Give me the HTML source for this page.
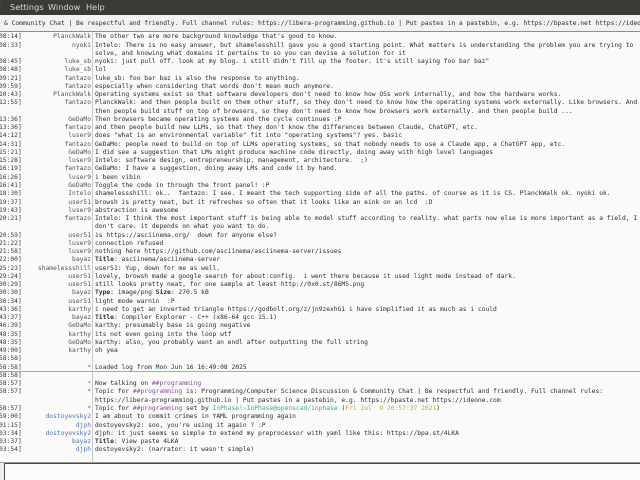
<!DOCTYPE html>
<html><head><meta charset="utf-8">
<style>
*{margin:0;padding:0;box-sizing:border-box}
html,body{width:640px;height:480px;overflow:hidden;background:#fafaf9}
body{position:relative;font-family:"DejaVu Sans Mono","Liberation Mono",monospace;font-size:6.3px;color:#2e2e2e}
#menu{position:absolute;left:0;top:0;width:640px;height:15px;background:#3b3a36;color:#dcd8cf;font-family:"DejaVu Sans","Liberation Sans",sans-serif;font-size:8.2px;line-height:15px;white-space:pre}
#menu span{position:absolute;top:0}
#topic{position:absolute;left:0;top:15px;width:640px;height:17px;background:#f3f2f0;border-bottom:1px solid #8d8d8a;white-space:pre;line-height:17px;padding-left:4px;overflow:hidden}
#log{position:absolute;left:0;top:32px;width:640px;height:430px;overflow:hidden}
#sep{position:absolute;left:92px;top:0;width:1px;height:430px;background:#c9c9c9}
.r{position:absolute;left:0;height:8.26px;line-height:8.26px;white-space:pre;width:640px}
.t{position:absolute;left:-1px;color:#3a3a3a}
.n{position:absolute;right:549px;color:#555;text-align:right}
.m{position:absolute;left:95px}
.b .n{color:#4d74b8}
b{font-weight:bold}
.div{position:absolute;left:0;width:640px;height:1px;background:#c8a085}
.pu{color:#8b4c9e}.gr{color:#3cae8c}.ye{color:#c9a52a}
#bottom{position:absolute;left:0;top:462px;width:640px;height:18px;background:#f0efed;border-top:1px solid #9a9a98}
#input{position:absolute;left:4px;top:463px;width:640px;height:17px;background:#fbfbfa;border-top:1px solid #4a4a48;border-left:1px solid #4a4a48}
</style></head><body>
<div id="menu"><span style="left:-3px">r</span><span style="left:10px">Settings</span><span style="left:48px">Window</span><span style="left:86px">Help</span></div>
<div id="topic">&amp; Community Chat | Be respectful and friendly. Full channel rules: https://libera-programming.github.io | Put pastes in a pastebin, e.g. https://bpaste.net https://ideone.com</div>
<div id="log">
<div id="sep"></div>
<div class="r" style="top:1.3px"><span class="t">08:14]</span><span class="n">PlanckWalk</span><span class="m">The other two are more background knowledge that's good to know.</span></div>
<div class="r" style="top:9.56px"><span class="t">08:33]</span><span class="n">nyoki</span><span class="m">Intelo: There is no easy answer, but shamelesshill gave you a good starting point. What matters is understanding the problem you are trying to</span></div>
<div class="r" style="top:17.82px"><span class="m">solve, and knowing what domains it pertains to so you can devise a solution for it</span></div>
<div class="r" style="top:26.08px"><span class="t">08:45]</span><span class="n">luke_sb</span><span class="m">nyoki: just pull off. look at my blog. i still didn't fill up the footer. it's still saying foo bar baz"</span></div>
<div class="r" style="top:34.34px"><span class="t">08:48]</span><span class="n">luke_sb</span><span class="m">lol</span></div>
<div class="r" style="top:42.6px"><span class="t">09:21]</span><span class="n">fantazo</span><span class="m">luke_sb: foo bar baz is also the response to anything.</span></div>
<div class="r" style="top:50.86px"><span class="t">09:59]</span><span class="n">fantazo</span><span class="m">especially when considering that words don't mean much anymore.</span></div>
<div class="r" style="top:59.12px"><span class="t">10:43]</span><span class="n">PlanckWalk</span><span class="m">Operating systems exist so that software developers don't need to know how OSs work internally, and how the hardware works.</span></div>
<div class="r" style="top:67.38px"><span class="t">12:55]</span><span class="n">fantazo</span><span class="m">PlanckWalk: and then people built on them other stuff, so they don't need to know how the operating systems work externally. Like browsers. And</span></div>
<div class="r" style="top:75.64px"><span class="m">then people build stuff on top of browsers, so they don't need to know how browsers work externally. and then people build ...</span></div>
<div class="r" style="top:83.9px"><span class="t">13:36]</span><span class="n">GeDaMo</span><span class="m">Then browsers became operating systems and the cycle continues :P</span></div>
<div class="r" style="top:92.16px"><span class="t">13:36]</span><span class="n">fantazo</span><span class="m">and then people build new LLMs, so that they don't know the differences between Claude, ChatGPT, etc.</span></div>
<div class="r" style="top:100.42px"><span class="t">14:12]</span><span class="n">luser9</span><span class="m">does "what is an environmental variable" fit into "operating systems"? yes. basic</span></div>
<div class="r" style="top:108.68px"><span class="t">14:31]</span><span class="n">fantazo</span><span class="m">GeDaMo: people need to build on top of LLMs operating systems, so that nobody needs to use a Claude app, a ChatGPT app, etc.</span></div>
<div class="r" style="top:116.94px"><span class="t">15:21]</span><span class="n">GeDaMo</span><span class="m">I did see a suggestion that LMs might produce machine code directly, doing away with high level languages</span></div>
<div class="r" style="top:125.2px"><span class="t">15:28]</span><span class="n">luser9</span><span class="m">Intelo: software design, entrepreneurship, management, architecture.  ;)</span></div>
<div class="r" style="top:133.46px"><span class="t">16:19]</span><span class="n">fantazo</span><span class="m">GeDaMo: I have a suggestion, doing away LMs and code it by hand.</span></div>
<div class="r" style="top:141.72px"><span class="t">16:26]</span><span class="n">luser9</span><span class="m">i been vibin</span></div>
<div class="r" style="top:149.98px"><span class="t">16:41]</span><span class="n">GeDaMo</span><span class="m">Toggle the code in through the front panel! :P</span></div>
<div class="r" style="top:158.24px"><span class="t">18:30]</span><span class="n">Intelo</span><span class="m">shamelessshill: ok..  fantazo: I see. I meant the tech supporting side of all the paths. of course as it is CS. PlanckWalk ok. nyoki ok.</span></div>
<div class="r" style="top:166.5px"><span class="t">19:37]</span><span class="n">user51</span><span class="m">browsh is pretty neat, but it refreshes so often that it looks like an eink on an lcd  :D</span></div>
<div class="r" style="top:174.76px"><span class="t">19:43]</span><span class="n">luser9</span><span class="m">abstraction is awesome</span></div>
<div class="r" style="top:183.02px"><span class="t">20:21]</span><span class="n">fantazo</span><span class="m">Intelo: I think the most important stuff is being able to model stuff according to reality. what parts now else is more important as a field, I</span></div>
<div class="r" style="top:191.28px"><span class="m">don't care. it depends on what you want to do.</span></div>
<div class="r" style="top:199.54px"><span class="t">20:59]</span><span class="n">user51</span><span class="m">is https://asciinema.org/  down for anyone else?</span></div>
<div class="r" style="top:207.8px"><span class="t">21:22]</span><span class="n">luser9</span><span class="m">connection refused</span></div>
<div class="r" style="top:216.06px"><span class="t">21:58]</span><span class="n">luser9</span><span class="m">nothing here https://github.com/asciinema/asciinema-server/issues</span></div>
<div class="r" style="top:224.32px"><span class="t">22:00]</span><span class="n">bayaz</span><span class="m"><b>Title</b>: asciinema/asciinema-server</span></div>
<div class="r" style="top:232.58px"><span class="t">25:23]</span><span class="n">shamelessshill</span><span class="m">user51: Yup, down for me as well.</span></div>
<div class="r" style="top:240.84px"><span class="t">29:24]</span><span class="n">user51</span><span class="m">lovely, browsh made a google search for about:config.  i went there because it used light mode instead of dark.</span></div>
<div class="r" style="top:249.1px"><span class="t">30:29]</span><span class="n">user51</span><span class="m">still looks pretty neat, for one sample at least http://0x0.st/86M5.png</span></div>
<div class="r" style="top:257.36px"><span class="t">30:30]</span><span class="n">bayaz</span><span class="m"><b>Type</b>: image/png <b>Size</b>: 270.5 kB</span></div>
<div class="r" style="top:265.62px"><span class="t">30:34]</span><span class="n">user51</span><span class="m">light mode warnin  :P</span></div>
<div class="r" style="top:273.88px"><span class="t">43:36]</span><span class="n">karthy</span><span class="m">i need to get an inverted triangle https://godbolt.org/z/jn9zexhG1 i have simplified it as much as i could</span></div>
<div class="r" style="top:282.14px"><span class="t">43:37]</span><span class="n">bayaz</span><span class="m"><b>Title</b>: Compiler Explorer - C++ (x86-64 gcc 15.1)</span></div>
<div class="r" style="top:290.4px"><span class="t">46:39]</span><span class="n">GeDaMo</span><span class="m">karthy: presumably base is going negative</span></div>
<div class="r" style="top:298.66px"><span class="t">48:35]</span><span class="n">karthy</span><span class="m">its not even going into the loop wtf</span></div>
<div class="r" style="top:306.92px"><span class="t">48:35]</span><span class="n">GeDaMo</span><span class="m">karthy: also, you probably want an endl after outputting the full string</span></div>
<div class="r" style="top:315.18px"><span class="t">49:00]</span><span class="n">karthy</span><span class="m">oh yea</span></div>
<div class="r" style="top:323.44px"><span class="t">58:58]</span></div>
<div class="r" style="top:331.7px"><span class="t">58:58]</span><span class="n" style="color:#777">*</span><span class="m">Loaded log from Mon Jun 16 16:49:08 2025</span></div>
<div class="div" style="top:338.7px"></div>
<div class="r" style="top:339.96px"><span class="t">58:58]</span></div>
<div class="r" style="top:348.22px"><span class="t">58:57]</span><span class="n" style="color:#5cb85c">*</span><span class="m">Now talking on <span class="pu">##programming</span></span></div>
<div class="r" style="top:356.48px"><span class="t">58:57]</span><span class="n pu">*</span><span class="m">Topic for <span class="pu">##programming</span> is: Programming/Computer Science Discussion &amp; Community Chat | Be respectful and friendly. Full channel rules:</span></div>
<div class="r" style="top:364.74px"><span class="m">https://libera-programming.github.io | Put pastes in a pastebin, e.g. https://bpaste.net https://ideone.com</span></div>
<div class="r" style="top:373px"><span class="t">58:57]</span><span class="n pu">*</span><span class="m">Topic for <span class="pu">##programming</span> set by <span class="gr">InPhase!~InPhase@openscad/inphase</span> (<span class="ye">Fri Jul  9 20:57:37 2021</span>)</span></div>
<div class="r b" style="top:381.26px"><span class="t">59:00]</span><span class="n">dostoyevsky2</span><span class="m">I am about to commit crimes in YAML programming again</span></div>
<div class="r b" style="top:389.52px"><span class="t">01:15]</span><span class="n">djph</span><span class="m">dostoyevsky2: soo, you're using it again ? :P</span></div>
<div class="r b" style="top:397.78px"><span class="t">03:34]</span><span class="n">dostoyevsky2</span><span class="m">djph: it just seems so simple to extend my preprocessor with yaml like this: https://bpa.st/4LKA</span></div>
<div class="r b" style="top:406.04px"><span class="t">03:37]</span><span class="n">bayaz</span><span class="m"><b>Title</b>: View paste 4LKA</span></div>
<div class="r b" style="top:414.3px"><span class="t">03:54]</span><span class="n">djph</span><span class="m">dostoyevsky2: (narrator: it wasn't simple)</span></div>
</div>
<div id="bottom"></div>
<div id="input"></div>
</body></html>
